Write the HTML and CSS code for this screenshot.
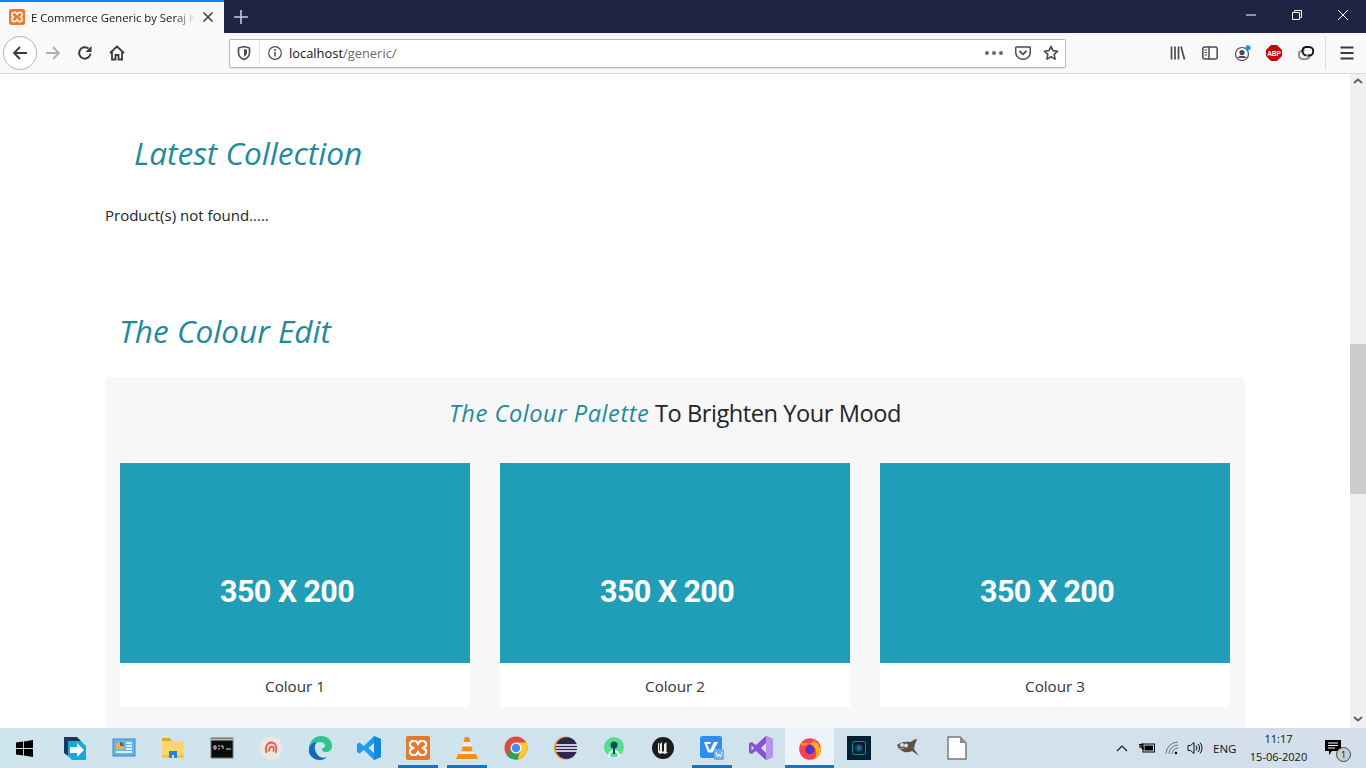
FILE: index.html
```html
<!DOCTYPE html>
<html lang="en">
<head>
<meta charset="utf-8">
<title>E Commerce Generic by Seraj K</title>
<link rel="stylesheet" href="styles.css">
</head>
<body>
<div class="screen">
  <header class="tabbar">
    <div class="tab">
      <svg class="favicon" viewBox="0 0 16 16"><rect width="16" height="16" rx="2" fill="#ee7b2d"/><path d="M4 3.500h2.500L8 5.500l1.500-2H12l1 1.200v2L11.500 8l1.500 1.300v2L12 12.500H9.500L8 10.500l-1.500 2H4l-1-1.200v-2L4.500 8 3 6.700v-2z" fill="none" stroke="#fff" stroke-width="1.500"/></svg>
      <span class="tab-title">E Commerce Generic by Seraj K</span>
      <svg class="tab-close" viewBox="0 0 10 10"><path d="M.5.500l9 9M9.500.500l-9 9" stroke="#3a3a3a" stroke-width="1.500"/></svg>
    </div>
    <svg class="newtab" viewBox="0 0 14 14"><path d="M7 0v14M0 7h14" stroke="#c9cad3" stroke-width="1.600"/></svg>
    <div class="winctl">
      <svg class="winbtn" viewBox="0 0 46 33"><path d="M18 16h10" stroke="#fff"/></svg>
      <svg class="winbtn" viewBox="0 0 46 33"><path d="M18.500 13.500h7v7h-7zM20.500 13.500v-2h7v7h-2" fill="none" stroke="#fff"/></svg>
      <svg class="winbtn" viewBox="0 0 46 33"><path d="M18 11l10 10M28 11L18 21" stroke="#fff"/></svg>
    </div>
  </header>

  <nav class="toolbar">
    <div class="backbtn">
      <svg viewBox="0 0 16 16" class="ico"><path d="M15 8H2M8 2L2 8l6 6" fill="none" stroke="#3b3b3d" stroke-width="1.800"/></svg>
    </div>
    <svg viewBox="0 0 16 16" class="ico fwd"><path d="M1 8h13M8 2l6 6-6 6" fill="none" stroke="#b1b1b3" stroke-width="1.800"/></svg>
    <svg viewBox="0 0 16 16" class="ico reload"><path d="M13.500 8.500A5.700 5.700 0 1 1 11.500 3.600" fill="none" stroke="#3b3b3d" stroke-width="2"/><path d="M14.500 1v6h-6z" fill="#3b3b3d"/></svg>
    <svg viewBox="0 0 16 16" class="ico home"><path d="M1 8l7-6.500L15 8M3 7v7.500h3.500V10h3v4.500H13V7" fill="none" stroke="#3b3b3d" stroke-width="1.800"/></svg>
    <div class="urlbar">
      <svg viewBox="0 0 16 16" class="ico-s shield"><path d="M8 1.500l5.500 1.500v4.500c0 3.500-2.500 6-5.500 7-3-1-5.500-3.500-5.500-7V3z" fill="none" stroke="#4a4a4f" stroke-width="1.600"/><path d="M8 4l3 .8v2.700c0 2-1.400 3.500-3 4.200z" fill="#4a4a4f"/></svg>
      <span class="urlsep"></span>
      <svg viewBox="0 0 16 16" class="ico-s info"><circle cx="8" cy="8" r="6.300" fill="none" stroke="#4a4a4f" stroke-width="1.200"/><path d="M8 7v4.500" stroke="#4a4a4f" stroke-width="1.500"/><circle cx="8" cy="4.900" r="1" fill="#4a4a4f"/></svg>
      <span class="url"><span class="host">localhost</span>/generic/</span>
      <span class="dots"><i></i><i></i><i></i></span>
      <svg viewBox="0 0 16 16" class="ico pocket"><path d="M1.500 2h13a.8.8 0 0 1 .8.800V7a7.300 7.300 0 0 1-14.600 0V2.800a.8.8 0 0 1 .8-.8z" fill="none" stroke="#4a4a4f" stroke-width="1.500"/><path d="M4.500 6L8 9.300 11.500 6" fill="none" stroke="#4a4a4f" stroke-width="1.800"/></svg>
      <svg viewBox="0 0 16 16" class="ico star"><path d="M8 1.300l2 4.300 4.700.6-3.500 3.200.9 4.700L8 11.800l-4.100 2.300.9-4.700L1.300 6.200 6 5.600z" fill="none" stroke="#4a4a4f" stroke-width="1.600" stroke-linejoin="round"/></svg>
    </div>
    <div class="tools">
      <svg viewBox="0 0 16 16" class="ico"><path d="M1.500 1.500v13M5 1.500v13M8.500 1.500v13M11 1.500l3.500 13" stroke="#4a4a4f" stroke-width="1.700" fill="none"/></svg>
      <svg viewBox="0 0 16 16" class="ico"><rect x=".8" y="2" width="14.400" height="12" rx="2" fill="none" stroke="#4a4a4f" stroke-width="1.500"/><path d="M7 2v12" stroke="#4a4a4f" stroke-width="1.500"/><path d="M2.500 5H5M2.500 7.500H5M2.500 10H5" stroke="#4a4a4f"/></svg>
      <svg viewBox="0 0 18 16" class="ico acct"><circle cx="8" cy="9" r="6.500" fill="none" stroke="#4a4a4f" stroke-width="1.200"/><circle cx="8" cy="7.500" r="2.600" fill="#4a4a4f"/><path d="M3.500 13c1-3 8-3 9 0z" fill="#4a4a4f"/><circle cx="14" cy="2.800" r="2.600" fill="#0a9cf5"/></svg>
      <svg viewBox="0 0 16 16" class="ico"><path d="M5 0h6l5 5v6l-5 5H5l-5-5V5z" fill="#c4040e"/><text x="8" y="10.600" class="abp">ABP</text></svg>
      <svg viewBox="0 0 16 16" class="ico"><path d="M6.500 5.500H5a4 4 0 0 0 0 8.500h3a4 4 0 0 0 3.500-4" fill="none" stroke="#8f8f8f" stroke-width="2.200"/><path d="M9.500 10.500H11a4 4 0 0 0 0-8.500H8a4 4 0 0 0-3.500 4c0 2.500 2 4.300 4 4.500" fill="none" stroke="#141414" stroke-width="2"/></svg>
      <span class="toolsep"></span>
      <svg viewBox="0 0 16 16" class="ico"><path d="M1.500 2.500h13M1.500 8h13M1.500 13.500h13" stroke="#3b3b3d" stroke-width="1.800"/></svg>
    </div>
  </nav>

  <div class="viewport">
    <main class="page">
      <h2 class="title title-latest">Latest Collection</h2>
      <p class="notfound">Product(s) not found.....</p>
      <h2 class="title title-edit">The Colour Edit</h2>
      <section class="panel">
        <h3 class="panel-head"><em>The Colour Palette</em> To Brighten Your Mood</h3>
        <div class="cards">
          <article class="card"><div class="thumb">350 X 200</div><div class="caption">Colour 1</div></article>
          <article class="card"><div class="thumb">350 X 200</div><div class="caption">Colour 2</div></article>
          <article class="card"><div class="thumb">350 X 200</div><div class="caption">Colour 3</div></article>
        </div>
      </section>
    </main>
    <aside class="scrollbar">
      <svg class="arrow" viewBox="0 0 10 6"><path d="M1 5l4-3.500L9 5" fill="none" stroke="#5d5d5d" stroke-width="1.800"/></svg>
      <div class="thumbbar"></div>
      <svg class="arrow" viewBox="0 0 10 6"><path d="M1 1l4 3.500L9 1" fill="none" stroke="#5d5d5d" stroke-width="1.800"/></svg>
    </aside>
  </div>

  <footer class="taskbar">
    <div class="tb start"><svg viewBox="0 0 16 16" class="ti16"><path d="M0 2.300l6.600-.9v6.200H0zM7.400 1.300L16 0v7.600H7.400zM0 8.400h6.600v6.200L0 13.700zM7.400 8.400H16V16l-8.600-1.300z" fill="#000"/></svg></div>
    <div class="tb"><svg viewBox="0 0 24 24" class="ti"><path d="M1 1h13l4 4H5v15l-4-3z" fill="#17395f"/><path d="M5 5h13l5 5v14H9l-4-4z" fill="#1ba7d8"/><path d="M7 11h7V7l7 7-7 7v-4H7z" fill="#fff"/></svg></div>
    <div class="tb"><svg viewBox="0 0 24 24" class="ti"><rect x="1" y="3" width="22" height="17" fill="#6db4e6" stroke="#3a87c8"/><circle cx="8" cy="10" r="4" fill="#f3b13c"/><path d="M8 10V6a4 4 0 0 1 4 4z" fill="#2a6fb8"/><path d="M14 7h6M14 10h6M14 13h6M4 16h16" stroke="#fff" stroke-width="1.500"/></svg></div>
    <div class="tb"><svg viewBox="0 0 24 24" class="ti"><path d="M1 5V2h8l2 3z" fill="#e3a72c"/><path d="M1 5h22v17H1z" fill="#fcd768"/><path d="M8 22v-7h8v7h-3v-3h-2v3z" fill="#1c87d8"/><path d="M1 19h7v3H1zM16 19h7v3h-7z" fill="#f6c544"/></svg></div>
    <div class="tb"><svg viewBox="0 0 24 24" class="ti"><rect x="1" y="2" width="22" height="20" fill="#0c0c0c" stroke="#777"/><path d="M1 3.500h22" stroke="#bbb" stroke-width="2"/><path d="M4 10h2v3H4zM8 10h2M8 13h2M11 10h2v3M16 13h5" stroke="#ddd" fill="none"/></svg></div>
    <div class="tb"><svg viewBox="0 0 24 24" class="ti"><circle cx="12" cy="12" r="11.500" fill="#ebe7e5"/><path d="M7.500 17c-2-6 1-10.500 5-10.500s6 4.500 4 10.500M10 15.500c0-3 1-5 3-5s2.500 3 1 5" fill="none" stroke="#e4604e" stroke-width="1.800"/></svg></div>
    <div class="tb"><svg viewBox="0 0 24 24" class="ti"><path d="M1 13C1 6 6 0 13 0c6 0 11 4 11 10 0 4-3 6-6 6-2 0-4-1-4-2 0-3 4-2 3-5-.7-2-3-3-5-3C7 6 4 9 1 13z" fill="#2fc38f"/><path d="M1 13c1-5 5-7 8-7-3 3-3 8 0 12 2 3 6 5 10 3-2 2-4 3-7 3C5 24 0 19 1 13z" fill="#0f6cb8"/></svg></div>
    <div class="tb"><svg viewBox="0 0 24 24" class="ti"><path d="M17 0l7 3v18l-7 3-10-10-4.500 3.500L0 16V8l2.500-1.500L7 10zM17 7l-5.500 5 5.500 5z" fill="#1f9cf0"/><path d="M17 0l7 3v18l-7 3z" fill="#0e7ac4" opacity=".6"/></svg></div>
    <div class="tb on"><svg viewBox="0 0 24 24" class="ti"><rect width="24" height="24" rx="2" fill="#e8782c"/><path d="M6 5h4l2 3 2-3h4l2 2v3l-3 2 3 2v3l-2 2h-4l-2-3-2 3H6l-2-2v-3l3-2-3-2V7z" fill="none" stroke="#fff" stroke-width="2.200"/></svg></div>
    <div class="tb on"><svg viewBox="0 0 24 24" class="ti"><path d="M9.800 1h4.400l1.300 5H8.500z" fill="#f39019"/><path d="M8.500 6h7l1 4.500h-9z" fill="#f4f1ec"/><path d="M7.500 10.500h9l1.200 5H6.300z" fill="#f39019"/><path d="M6.300 15.500h11.400l.6 2.500H5.700z" fill="#f4f1ec"/><path d="M3 18h18l2 5H1z" fill="#f39019"/></svg></div>
    <div class="tb"><svg viewBox="0 0 24 24" class="ti"><circle cx="12" cy="12" r="11.500" fill="#de4b3d"/><path d="M3.500 19.700A11.500 11.500 0 0 0 13.500 23.400L17 12H7z" fill="#2fa24f"/><path d="M12 6.500h10.200a11.500 11.500 0 0 1-8.700 16.900L17 12z" fill="#fbc831"/><circle cx="12" cy="12" r="5.500" fill="#fff"/><circle cx="12" cy="12" r="4.200" fill="#4a8cf0"/></svg></div>
    <div class="tb"><svg viewBox="0 0 24 24" class="ti"><circle cx="12.500" cy="12" r="11.500" fill="#f39a1f"/><circle cx="13.500" cy="12" r="10.800" fill="#2d2457"/><path d="M3 9h21M3 12h21M3 15h21" stroke="#fff" stroke-width="1.300"/></svg></div>
    <div class="tb"><svg viewBox="0 0 24 24" class="ti"><circle cx="12" cy="11" r="10" fill="#53df90"/><path d="M7 21c0-4 2-6 5-6s5 2 5 6" fill="none" stroke="#fff" stroke-width="2"/><circle cx="12" cy="9" r="3.500" fill="#13485b"/><path d="M12 12v6" stroke="#13485b" stroke-width="2"/></svg></div>
    <div class="tb"><svg viewBox="0 0 24 24" class="ti"><circle cx="12" cy="12" r="11" fill="#1c1c1c"/><path d="M7 7.500v8c0 2 2.500 3 4.500 1.500 1 1 3 1.200 5.500-.5-1.200 0-1.500-.5-1.500-1.500V6l-2.500 2v7c-.8.800-1.500.8-2 .3V6L9 8v7c-.5 0-.8-.3-.8-1V6.500z" fill="#eee"/></svg></div>
    <div class="tb on"><svg viewBox="0 0 24 24" class="ti"><rect width="22" height="22" rx="2.500" fill="#2d8df0"/><path d="M4 6h7l-.8 2H7l3 6.500L14 6h4l-5.500 10.500h-4.500z" fill="#fff"/><rect x="14" y="13" width="10" height="11" rx="1.500" fill="#6fb0f5"/><path d="M16 16l1.500 5 1.500-3 1.500 3L22 16" fill="none" stroke="#fff"/></svg></div>
    <div class="tb"><svg viewBox="0 0 24 24" class="ti"><path d="M17 0l7 3v18l-7 3L7 15 2.500 18 0 16.500v-9L2.500 6 7 9zM17 7l-5 5 5 5zM2.500 9.500v5L5 12z" fill="#8a52d4"/><path d="M17 0l7 3v18l-7 3z" fill="#b794e8"/></svg></div>
    <div class="tb active"><svg viewBox="0 0 24 24" class="ti"><circle cx="12" cy="13" r="10.800" fill="#f9415a"/><path d="M17 1c1 3 .5 4-1 5 3 0 5 2 5.500 6 .5-1 1-2 1-3 1.500 6 0 13-7 14.500 3-3 4-7.500 1.500-11-1.500-2-4-3-5-5 2-1 5-2 5.500-6.500z" fill="#ffb01f"/><path d="M2 9c1-1.500 2-2.800 3-3.500l.5 2c2-1 4-1 6 0-1.500.3-2.500 1.200-3 2.500-2.500 0-4.500-.3-6.500-1z" fill="#ff8a1f"/><circle cx="12" cy="13.500" r="4.700" fill="#5c35b8"/></svg></div>
    <div class="tb"><svg viewBox="0 0 24 24" class="ti"><rect width="24" height="24" fill="#04202f"/><rect x="5.500" y="5.500" width="13" height="13" rx="2" fill="none" stroke="#1d86a8"/><circle cx="12" cy="12" r="3.800" fill="#1b4a60"/><path d="M11 9.500l3 2.500-3 2.500z" fill="#1d86a8"/></svg></div>
    <div class="tb"><svg viewBox="0 0 24 24" class="ti"><path d="M1 9c3-3 9-4 14-3 2-2 4-3 6-3-1 2-1 4-2 5l-1 5 5 7-7-5c-5 3-12 1-15-6z" fill="#5c5543"/><circle cx="6" cy="9" r="2" fill="#ddd"/><circle cx="10" cy="9.500" r="2" fill="#ddd"/><path d="M1 12c3 1 5 1 7 0" stroke="#b9a98c" fill="none"/></svg></div>
    <div class="tb"><svg viewBox="0 0 20 24" class="ti"><path d="M1 1h12l6 6v16H1z" fill="#fff" stroke="#7a7a7a" stroke-width="1.500"/><path d="M13 1l6 6h-6z" fill="#8c8c8c"/></svg></div>

    <div class="tray">
      <svg viewBox="0 0 12 7" class="tr-chev"><path d="M1 6l5-5 5 5" fill="none" stroke="#111" stroke-width="1.100"/></svg>
      <svg viewBox="0 0 16 10" class="tr-batt"><path d="M0 1.500h3M0 4h3M3 0v6h2M3 3h-3" stroke="#000"/><rect x="4" y="1" width="11.500" height="8" fill="none" stroke="#000"/><rect x="5.500" y="2.500" width="8.500" height="5"/></svg>
      <svg viewBox="0 0 14 14" class="tr-wifi"><path d="M1 13A12 12 0 0 1 13 1M4 13a9 9 0 0 1 9-9M7 13a6 6 0 0 1 6-6" fill="none" stroke="#555" stroke-width=".8"/><circle cx="11" cy="12" r="1.300"/></svg>
      <svg viewBox="0 0 16 14" class="tr-vol"><path d="M1 4.500h2.500L7 1.500v11l-3.500-3H1z" fill="none" stroke="#111"/><path d="M9 4.500a4 4 0 0 1 0 5M11 3a6 6 0 0 1 0 8M13 1.500a8.500 8.500 0 0 1 0 11" fill="none" stroke="#111"/></svg>
      <span class="tr-lang">ENG</span>
      <div class="tr-clock"><span>11:17</span><span>15-06-2020</span></div>
      <div class="tr-note">
        <svg viewBox="0 0 16 15" class="tr-msg"><path d="M0 0h16v11H7l-3 4v-4H0z"/><path d="M3 3h10M3 5.500h10M3 8h7" stroke="#fff"/></svg>
        <span class="tr-badge">1</span>
      </div>
    </div>
  </footer>
</div>
</body>
</html>
```

FILE: styles.css
```css
* { box-sizing: border-box; }
html, body { margin: 0; height: 100%; overflow: hidden; }
body { font-family: "Open Sans", "Noto Sans", sans-serif; background: #fff; }
.screen { width: 1366px; height: 768px; display: flex; flex-direction: column; overflow: hidden; }

/* Tab strip */
.tabbar { height: 33px; flex: none; display: flex; align-items: center; background: #1f2444; }
.tab { width: 224px; height: 33px; background: #f9f9fa; border-top: 2px solid #0a84ff; display: flex; align-items: center; padding: 0 11px 1px 9px; }
.favicon { width: 16px; height: 16px; flex: none; }
.tab-title { width: 164px; margin-left: 6px; font-size: 11.300px; white-space: nowrap; overflow: hidden; color: #15141a; -webkit-mask-image: linear-gradient(90deg, #000 88%, transparent); mask-image: linear-gradient(90deg, #000 88%, transparent); }
.tab-close { width: 10px; height: 10px; margin-left: auto; }
.newtab { width: 14px; height: 14px; margin-left: 10px; }
.winctl { margin-left: auto; display: flex; }
.winbtn { width: 46px; height: 33px; display: block; margin-top: -2px; }

/* Toolbar */
.toolbar { height: 41px; flex: none; display: flex; align-items: center; background: #f9f9fa; border-bottom: 1px solid #d9d9db; position: relative; }
.ico { width: 16px; height: 16px; flex: none; display: block; }
.ico-s { width: 16px; height: 16px; flex: none; }
.backbtn { width: 34px; height: 34px; margin-left: 3px; border: 1px solid #b5b5b7; border-radius: 50%; background: #fff; display: flex; align-items: center; justify-content: center; }
.fwd { margin-left: 8px; }
.reload { margin-left: 16px; }
.home { margin-left: 16px; }
.urlbar { width: 837px; height: 29px; margin-left: 104px; background: #fff; border: 1px solid #b8b8ba; border-radius: 2px; display: flex; align-items: center; padding: 0 6px 0 6px; box-shadow: 0 1px 1px rgba(0,0,0,.08); }
.urlsep { width: 1px; height: 24px; background: #e4e4e6; margin-left: 7px; }
.info { margin-left: 7px; }
.url { margin-left: 6px; font-size: 12.900px; color: #6b6b70; }
.host { color: #111; }
.dots { margin-left: auto; display: flex; gap: 3px; }
.dots i { width: 4px; height: 4px; border-radius: 50%; background: #6a6a6e; display: block; }
.pocket { margin-left: 12px; }
.star { margin-left: 12px; }
.tools { margin-left: 104px; display: flex; align-items: center; gap: 16px; flex: none; }
.acct { width: 18px; margin-right: -2px; }
.abp { font: bold 6.500px "Liberation Sans", sans-serif; fill: #fff; text-anchor: middle; }
.toolsep { width: 1px; height: 34px; background: #dcdcde; margin: 0 -3px 0 -5px; }

/* Page */
.viewport { flex: 1; min-height: 0; display: flex; overflow: hidden; }
.page { width: 1350px; flex: none; padding: 0 105px; color: #212529; overflow: hidden; }
.title { margin: 0; font-weight: 400; font-style: italic; font-size: 31.600px; line-height: 40px; color: #1f8a9e; }
.title-latest { margin: 59px 0 0 29px; }
.notfound { margin: 31px 0 0; font-size: 15px; line-height: 22px; color: #212529; }
.title-edit { margin: 85px 0 0 14px; }
.panel { margin-top: 26px; height: 400px; background: #f7f7f7; border-radius: 5px; padding: 15px; }
.panel-head { margin: 0; text-align: center; font-weight: 400; font-size: 23.600px; line-height: 42px; color: #212529; letter-spacing: -0.45px; }
.panel-head em { color: #1f8a9e; letter-spacing: 0.55px; }
.cards { display: flex; gap: 30px; margin-top: 29px; }
.card { width: 350px; background: #fff; }
.thumb { height: 200px; background: #209eb7; color: #fff; font: 700 30.500px/34px Roboto, "Liberation Sans", sans-serif; letter-spacing: -0.6px; padding: 112px 0 0 100px; }
.caption { height: 44px; line-height: 47px; text-align: center; font-size: 15.200px; color: #333; }

/* Scrollbar */
.scrollbar { width: 16px; flex: none; background: #f0f0f0; display: flex; flex-direction: column; align-items: center; }
.arrow { width: 10px; height: 6px; margin: 4px 0; flex: none; }
.thumbbar { width: 16px; height: 150px; background: #cdcdcd; margin: 256px 0 auto; }
.scrollbar .arrow:last-child { margin-bottom: 6px; }

/* Taskbar */
.taskbar { height: 40px; flex: none; display: flex; background: linear-gradient(90deg, #cfe5ed 0%, #d0e3ec 50%, #d3dfeb 100%); }
.tb { width: 49px; height: 40px; flex: none; display: flex; align-items: center; justify-content: center; }
.tb.start { width: 50px; padding-right: 2px; }
.tb.on { background: linear-gradient(#0a78d0, #0a78d0) center bottom / 40px 3px no-repeat; }
.tb.active { background: #edf3f8; border-bottom: 3px solid #0a78d0; padding-top: 3px; }
.ti { width: 24px; height: 24px; display: block; }
.ti16 { width: 17px; height: 17px; display: block; }
.tray { margin-left: auto; display: flex; align-items: center; height: 40px; padding-right: 10px; }
.tr-chev { width: 12px; height: 7px; margin-right: 11px; }
.tr-batt { width: 16px; height: 10px; margin-right: 10px; }
.tr-wifi { width: 14px; height: 14px; margin-right: 8px; }
.tr-vol { width: 16px; height: 14px; margin-right: 10px; }
.tr-lang { font-size: 11.500px; color: #111; width: 36px; }
.tr-clock { width: 66px; margin-left: -3.500px; display: flex; flex-direction: column; align-items: center; font-size: 11px; line-height: 18px; color: #111; }
.tr-note { position: relative; width: 42px; height: 40px; margin-left: 2.500px; display: flex; align-items: center; justify-content: center; }
.tr-msg { width: 16px; height: 15px; margin-right: 4px; margin-bottom: 2px; }
.tr-badge { position: absolute; left: 22px; top: 19px; width: 15px; height: 15px; border-radius: 50%; background: #c9ccd0; border: 1px solid #444; font-size: 9.500px; line-height: 13px; text-align: center; color: #111; }
```
